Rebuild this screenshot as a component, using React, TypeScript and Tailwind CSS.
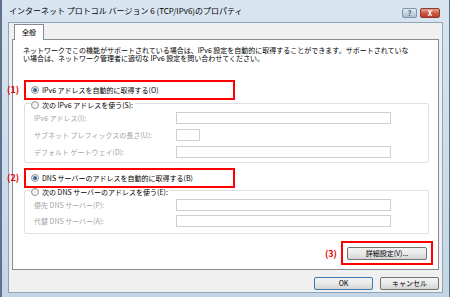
const jp = "font-['Noto_Sans_CJK_JP','Noto_Sans_CJK_SC',sans-serif]";

const Radio = ({ checked = false }: { checked?: boolean }) => (
  <span className="flex h-[8px] w-[8px] shrink-0 items-center justify-center rounded-full border border-[#8e9297] bg-gradient-to-br from-[#e6e6e6] to-[#ffffff]">
    {checked && (
      <span className="h-[4px] w-[4px] rounded-full bg-gradient-to-br from-[#5e8fbf] to-[#1b4872]" />
    )}
  </span>
);

const Field = ({ label, width = "w-[215px]" }: { label: string; width?: string }) => (
  <div className="flex h-[12px] items-center">
    <span className="w-[142px] text-[7px] leading-none text-[#a3a3a3]">{label}</span>
    <div className={`h-[12px] ${width} border border-[#cfcfcf] bg-white`} />
  </div>
);

const Btn = ({ label, primary = false }: { label: string; primary?: boolean }) => (
  <div
    className={`flex h-[13px] w-[59px] items-center justify-center rounded-[2px] border bg-gradient-to-b from-[#f4f4f4] via-[#e9e9e9] to-[#d4d4d4] text-[7px] leading-none text-black ${
      primary ? "border-[#3a7ab4]" : "border-[#737373]"
    }`}
  >
    {label}
  </div>
);

export default function App() {
  return (
    <div className={`flex h-[297px] w-[450px] flex-col overflow-hidden border-l-2 border-r border-[#5e738b] bg-gradient-to-b from-[#d9e5f0] to-[#c3d5e6] ${jp}`}>
      {/* title bar */}
      <div className="flex h-[22px] shrink-0 items-center justify-between pl-[7px] pr-[9px]">
        <span className="text-[8px] leading-none text-black">
          インターネット プロトコル バージョン 6 (TCP/IPv6)のプロパティ
        </span>
        <div className="mt-[4px] flex items-center gap-[3px]">
          <div className="flex h-[10px] w-[15px] items-center justify-center rounded-[2px] border border-[#7f93a8] bg-gradient-to-b from-[#e3ecf5] to-[#a9bdd1] text-[7px] font-bold leading-none text-[#35485c]">
            ?
          </div>
          <div className="flex h-[10px] w-[20px] items-center justify-center rounded-[2px] border border-[#8a3a30] bg-gradient-to-b from-[#e8a393] via-[#cf5c45] to-[#b8392a] text-[7px] font-bold leading-none text-white">
            X
          </div>
        </div>
      </div>

      {/* client */}
      <div className="mx-[6px] mb-[4px] flex flex-1 flex-col border border-[#8fa4b9] bg-[#f0f0f0]">
        {/* tab */}
        <div className="relative z-10 -mb-px ml-[5px] mt-px flex h-[16px] w-[30px] items-center justify-center border border-b-0 border-[#898c95] bg-white text-[7px] leading-none text-black">
          全般
        </div>

        {/* panel */}
        <div className="ml-[3px] flex h-[231px] w-[427px] flex-col border border-[#898c95] bg-white">
          <div className="flex flex-col pl-[10px] pt-[7px] text-[7px] leading-none text-black">
            <span className="h-[8px]">
              ネットワークでこの機能がサポートされている場合は、IPv6 設定を自動的に取得することができます。サポートされていな
            </span>
            <span className="h-[8px]">い場合は、ネットワーク管理者に適切な IPv6 設定を問い合わせてください。</span>
          </div>

          {/* (1) */}
          <div className="relative ml-[11px] mt-[17px] flex h-[20px] w-[211px] items-center gap-[3px] border-2 border-[#ff0000] pl-[5px]">
            <span className="absolute left-[-19px] top-[3px] text-[9px] font-bold leading-none text-[#e60000]">(1)</span>
            <Radio checked />
            <span className="text-[7px] leading-none text-black">IPv6 アドレスを自動的に取得する(O)</span>
          </div>

          {/* group 1 */}
          <div className="ml-[11px] mt-[3px] h-[60px] w-[405px] rounded-[2px] border border-[#dde2e6]">
            <div className="-mt-[3px] ml-[6px] flex h-[8px] w-fit items-center gap-[3px] bg-white pr-[2px]">
              <Radio />
              <span className="text-[7px] leading-none text-black">次の IPv6 アドレスを使う(S):</span>
            </div>
            <div className="mt-[3px] flex flex-col gap-[5px] pl-[9px]">
              <Field label="IPv6 アドレス(I):" />
              <Field label="サブネット プレフィックスの長さ(U):" width="w-[24px]" />
              <Field label="デフォルト ゲートウェイ(D):" />
            </div>
          </div>

          {/* (2) */}
          <div className="relative ml-[11px] mt-[5px] flex h-[20px] w-[211px] items-center gap-[3px] border-2 border-[#ff0000] pl-[5px]">
            <span className="absolute left-[-19px] top-[3px] text-[9px] font-bold leading-none text-[#e60000]">(2)</span>
            <Radio checked />
            <span className="text-[7px] leading-none text-black">DNS サーバーのアドレスを自動的に取得する(B)</span>
          </div>

          {/* group 2 */}
          <div className="ml-[11px] mt-[2px] h-[44px] w-[405px] rounded-[2px] border border-[#dde2e6]">
            <div className="-mt-[3px] ml-[6px] flex h-[8px] w-fit items-center gap-[3px] bg-white pr-[2px]">
              <Radio />
              <span className="text-[7px] leading-none text-black">次の DNS サーバーのアドレスを使う(E):</span>
            </div>
            <div className="mt-[3px] flex flex-col gap-[4px] pl-[9px]">
              <Field label="優先 DNS サーバー(P):" />
              <Field label="代替 DNS サーバー(A):" />
            </div>
          </div>

          {/* (3) */}
          <div className="mr-[5px] mt-[7px] flex items-center justify-end gap-[4px]">
            <span className="text-[9px] font-bold leading-none text-[#e60000]">(3)</span>
            <div className="flex h-[24px] w-[92px] items-center justify-center border-2 border-[#ff0000]">
              <div className="flex h-[13px] w-[80px] items-center justify-center rounded-[2px] border border-[#737373] bg-gradient-to-b from-[#f4f4f4] via-[#e9e9e9] to-[#d4d4d4] text-[7px] leading-none text-black">
                詳細設定(V)...
              </div>
            </div>
          </div>
        </div>

        {/* dialog buttons */}
        <div className="mr-[3px] mt-[7px] flex justify-end gap-[7px]">
          <Btn label="OK" primary />
          <Btn label="キャンセル" />
        </div>
      </div>
    </div>
  );
}
